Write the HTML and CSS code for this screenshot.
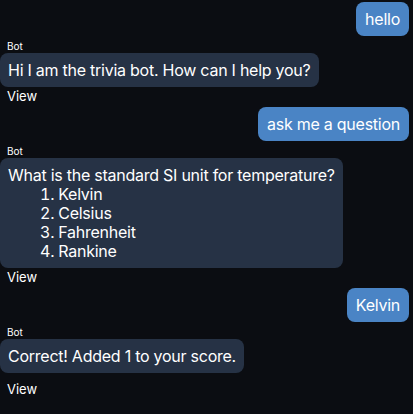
FILE: index.html
```html
<!DOCTYPE html>
<html lang="en">
<head>
<meta charset="utf-8">
<title>Trivia bot</title>
<link rel="stylesheet" href="styles.css">
</head>
<body>
<div class="chat">
  <div class="bubble user">hello</div>
  <div class="bot-msg">
    <div class="sender">Bot</div>
    <div class="bubble bot">Hi I am the trivia bot. How can I help you?</div>
    <div class="view">View</div>
  </div>
  <div class="bubble user">ask me a question</div>
  <div class="bot-msg">
    <div class="sender">Bot</div>
    <div class="bubble bot">What is the standard SI unit for temperature?
      <ol class="options">
        <li>Kelvin</li>
        <li>Celsius</li>
        <li>Fahrenheit</li>
        <li>Rankine</li>
      </ol>
    </div>
    <div class="view">View</div>
  </div>
  <div class="bubble user">Kelvin</div>
  <div class="bot-msg">
    <div class="sender">Bot</div>
    <div class="bubble bot">Correct! Added 1 to your score.</div>
    <div class="view view-last">View</div>
  </div>
</div>
</body>
</html>
```

FILE: styles.css
```css
html, body {
  margin: 0;
  padding: 0;
  background: #0b0d12;
}
body {
  font-family: Inter, "Noto Sans", sans-serif;
  color: #ffffff;
  width: 413px;
  height: 414px;
  overflow: hidden;
}
.chat {
  display: flex;
  flex-direction: column;
  padding: 2px 4px 0 0;
}
.bubble {
  font-size: 16px;
  line-height: 19px;
  letter-spacing: -0.25px;
  padding: 8px 8px 7px 8px;
  border-radius: 8px;
}
.user {
  align-self: flex-end;
  background: #4a84c5;
  margin-top: 3px;
  padding-left: 9px;
  padding-right: 9px;
}
.user:first-child {
  margin-top: 0;
}
.bot-msg {
  display: flex;
  flex-direction: column;
  align-items: flex-start;
}
.sender {
  font-size: 10px;
  line-height: 13px;
  margin: 4px 0 0 7px;
}
.bot {
  background: #263245;
}
.options {
  margin: 0;
  padding: 0 0 0 32px;
  list-style-position: inside;
}
.view {
  font-size: 13px;
  line-height: 15px;
  margin: 2px 0 0 7px;
}
.view-last {
  margin-top: 9px;
}
```
